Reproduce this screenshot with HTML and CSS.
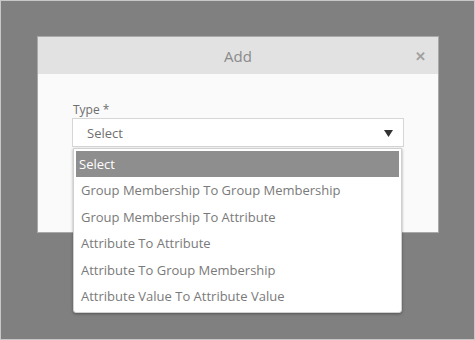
FILE: index.html
```html
<!DOCTYPE html>
<html>
<head>
<meta charset="utf-8">
<link rel="stylesheet" href="styles.css">
</head>
<body>
<div class="screen">
  <div class="dialog">
    <div class="header">
      <span class="title">Add</span>
      <span class="close">&#x2715;</span>
    </div>
    <div class="content">
      <label class="label">Type *</label>
      <div class="field">
        <div class="select">
          <span>Select</span>
          <svg class="arrow" width="9" height="7" viewBox="0 0 9 7"><path d="M0 0H9L4.5 7Z" fill="#333"/></svg>
        </div>
        <ul class="menu">
          <li class="item active">Select</li>
          <li class="item">Group Membership To Group Membership</li>
          <li class="item">Group Membership To Attribute</li>
          <li class="item">Attribute To Attribute</li>
          <li class="item">Attribute To Group Membership</li>
          <li class="item">Attribute Value To Attribute Value</li>
        </ul>
      </div>
    </div>
  </div>
</div>
</body>
</html>
```

FILE: styles.css
```css
* { box-sizing: border-box; }
html, body { margin: 0; padding: 0; }
body { font-family: "Open Sans", "Noto Sans", sans-serif; }
.screen {
  width: 475px;
  height: 340px;
  background: #808080;
  border: 1px solid #c8c8c8;
  padding: 35px 0 0 36px;
}
.dialog {
  width: 402px;
  border: 1px solid #a9a9a9;
  background: #fafafa;
}
.header {
  position: relative;
  height: 37px;
  background: #e2e2e2;
  display: flex;
  align-items: center;
  justify-content: center;
}
.title {
  font-size: 15px;
  color: #8a8a8a;
}
.close {
  position: absolute;
  right: 12px;
  top: 10px;
  font-size: 13px;
  font-weight: bold;
  color: #a0a0a0;
}
.content {
  height: 158px;
  padding: 27px 34px 0 34px;
}
.label {
  display: block;
  font-size: 12px;
  color: #6e6e6e;
  line-height: 17px;
  padding-left: 1px;
}
.field { position: relative; }
.select {
  height: 29px;
  border: 1px solid #d6d6d6;
  background: #fff;
  display: flex;
  align-items: center;
  justify-content: space-between;
  padding: 0 10px 0 14px;
  font-size: 13px;
  color: #707070;
}
.arrow { margin-top: 1px; }
.menu {
  position: absolute;
  left: 1px;
  top: 30px;
  width: 329px;
  margin: 0;
  padding: 2px 2px 2px;
  list-style: none;
  background: #fff;
  border: 1px solid #d0d0d0;
  border-radius: 0 0 3px 3px;
  box-shadow: 0 1px 3px rgba(0,0,0,0.35);
}
.item {
  height: 26.5px;
  line-height: 27px;
  padding-left: 5px;
  font-size: 13px;
  color: #7a7a7a;
  white-space: nowrap;
}
.item.active {
  height: 26px;
  line-height: 27px;
  padding-left: 3px;
  background: #8e8e8e;
  color: #fff;
}
```
